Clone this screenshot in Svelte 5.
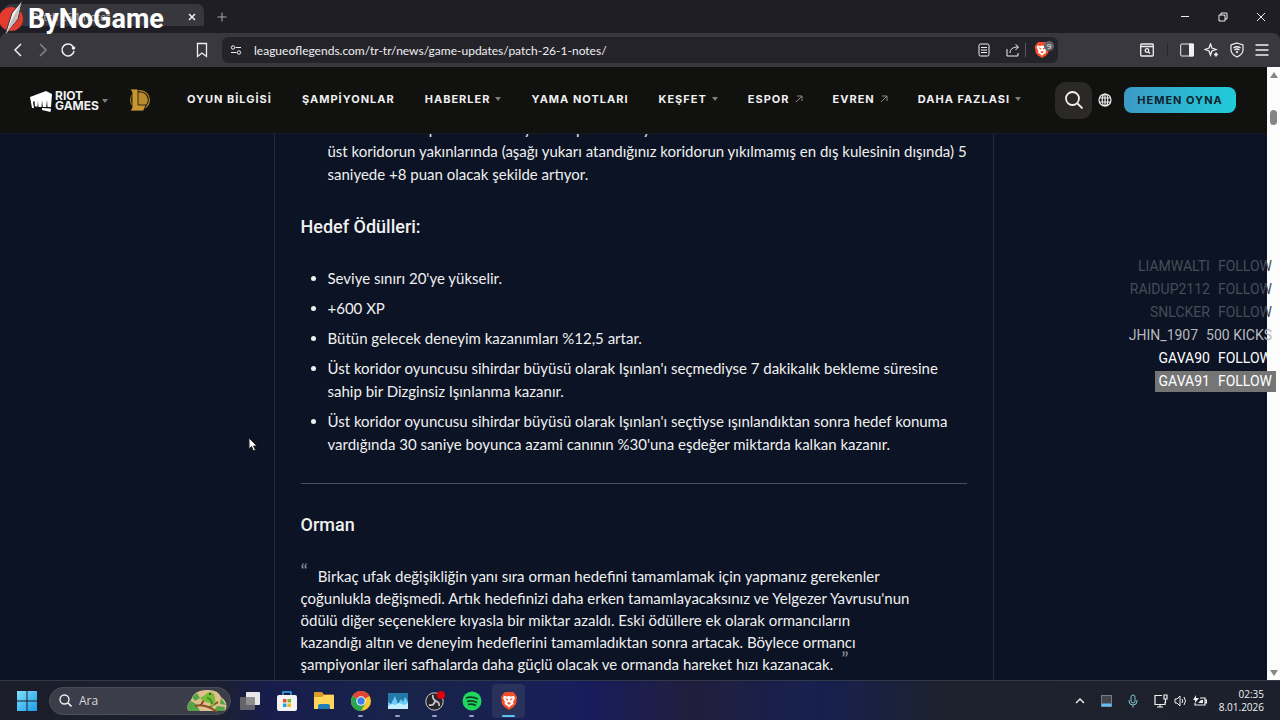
<script lang="ts">
  interface NavItem {
    label: string;
    kind?: 'menu' | 'external';
  }

  const nav: NavItem[] = [
    { label: 'OYUN BİLGİSİ' },
    { label: 'ŞAMPİYONLAR' },
    { label: 'HABERLER', kind: 'menu' },
    { label: 'YAMA NOTLARI' },
    { label: 'KEŞFET', kind: 'menu' },
    { label: 'ESPOR', kind: 'external' },
    { label: 'EVREN', kind: 'external' },
    { label: 'DAHA FAZLASI', kind: 'menu' },
  ];

  // Wrapped lines of each reward entry.
  const rewards = [
    ["Seviye sınırı 20'ye yükselir."],
    ['+600 XP'],
    ['Bütün gelecek deneyim kazanımları %12,5 artar.'],
    [
      "Üst koridor oyuncusu sihirdar büyüsü olarak Işınlan'ı seçmediyse 7 dakikalık bekleme süresine",
      'sahip bir Dizginsiz Işınlanma kazanır.',
    ],
    [
      "Üst koridor oyuncusu sihirdar büyüsü olarak Işınlan'ı seçtiyse ışınlandıktan sonra hedef konuma",
      "vardığında 30 saniye boyunca azami canının %30'una eşdeğer miktarda kalkan kazanır.",
    ],
  ];

  const events = [
    { user: 'LIAMWALTI', action: 'FOLLOW', tone: 'old' },
    { user: 'RAIDUP2112', action: 'FOLLOW', tone: 'old' },
    { user: 'SNLCKER', action: 'FOLLOW', tone: 'old' },
    { user: 'JHIN_1907', action: '500 KICKS', tone: 'recent' },
    { user: 'GAVA90', action: 'FOLLOW', tone: 'new' },
    { user: 'GAVA91', action: 'FOLLOW', tone: 'latest' },
  ];

  const apps = ['Görev görünümü', 'Mağaza', 'Dosya Gezgini', 'Chrome', 'Monitör', 'OBS', 'Spotify', 'Brave'];

  let query = $state('');
  let url = $state('leagueoflegends.com/tr-tr/news/game-updates/patch-26-1-notes/');
</script>

{#snippet brave()}
  <path d="M6 1h8l2 2 2 3-1 7-2.500 3-4.500 3-4.500-3L3 13 2 6l2-3z" fill="#f4502b" />
  <path d="M5 5l3 .5 2-.5 2 .5 3-.5 1 2-2 4 .5 2-2.500 1.500L10 16.500 8 14.500 5.500 13l.5-2-2-4z" fill="#fff" />
  <path d="M6 7l3 1-.500 2zM14 7l-3 1 .5 2zM8 12l2-1 2 1-2 2z" fill="#f4502b" />
{/snippet}

<div class="screen">
  <div class="tabs">
    <div class="tab">
      <span class="tab-title">Patch 26.1 Notes</span>
      <button class="icon" aria-label="Sekmeyi kapat">
        <svg width="10" height="10" viewBox="0 0 10 10"><path d="M2 2l6 6M8 2l-6 6" stroke-width="1.500" /></svg>
      </button>
    </div>
    <button class="icon new-tab" aria-label="Yeni sekme">
      <svg width="10" height="10" viewBox="0 0 10 10"><path d="M5 .5v9M.5 5h9" /></svg>
    </button>
    <div class="window-buttons">
      <button class="icon" aria-label="Küçült">
        <svg width="10" height="10" viewBox="0 0 10 10"><path d="M1 4.500h8" /></svg>
      </button>
      <button class="icon" aria-label="Geri yükle">
        <svg width="10" height="10" viewBox="0 0 10 10"><path d="M1 3h6v6H1zM3 3V1h6v6H7" /></svg>
      </button>
      <button class="icon" aria-label="Kapat">
        <svg width="10" height="10" viewBox="0 0 10 10"><path d="M1 1l8 8M9 1L1 9" /></svg>
      </button>
    </div>
  </div>

  <div class="toolbar">
    <div class="history">
      <button class="icon" aria-label="Geri">
        <svg width="16" height="16" viewBox="0 0 16 16"><path d="M11 2L5 8l6 6" stroke-width="1.500" /></svg>
      </button>
      <button class="icon dim" aria-label="İleri">
        <svg width="16" height="16" viewBox="0 0 16 16"><path d="M5 2l6 6-6 6" stroke-width="1.500" /></svg>
      </button>
      <button class="icon" aria-label="Yenile">
        <svg width="16" height="16" viewBox="0 0 16 16">
          <path d="M14 9a6 6 0 1 1-1-4.500" stroke-width="1.500" />
          <circle cx="13.500" cy="6" r="1.800" fill="currentColor" stroke="none" />
        </svg>
      </button>
    </div>
    <button class="icon" aria-label="Yer imi ekle">
      <svg width="16" height="16" viewBox="0 0 16 16"><path d="M3.500 1.500h9v13L8 11l-4.500 3.500z" stroke-width="1.300" /></svg>
    </button>
    <div class="address">
      <svg width="12" height="12" viewBox="0 0 12 12">
        <circle cx="3" cy="3.500" r="1.700" /><circle cx="9" cy="8.500" r="1.700" />
        <path d="M5.500 3.500H11M1 8.500h5.500" />
      </svg>
      <input type="text" aria-label="Adres" bind:value={url} />
      <button class="icon reader" aria-label="Okuma modu">
        <svg width="12" height="14" viewBox="0 0 12 14"><rect x="1" y="1" width="10" height="12" rx="1.500" /><path d="M3 4.500h6M3 7h6M3 9.500h6" /></svg>
      </button>
      <button class="icon" aria-label="Paylaş">
        <svg width="14" height="14" viewBox="0 0 14 14"><path d="M1 6v7h11v-3M4 10c0-4 3-6 8-6M9.500 1.500L12.500 4 9.500 7" /></svg>
      </button>
      <span class="divider"></span>
      <button class="icon shield" aria-label="Brave Shields">
        <svg class="solid" width="18" height="18" viewBox="0 0 20 20">{@render brave()}</svg>
        <span class="count">9</span>
      </button>
    </div>
    <div class="tools">
      <button class="icon" aria-label="Sekmelerde ara">
        <svg width="14" height="14" viewBox="0 0 14 14"><rect x=".7" y="1" width="12.600" height="12" rx="1" stroke-width="1.300" /><path d="M1 3.500h12M8.500 9l1.500 1.500" stroke-width="1.300" /><circle cx="7" cy="7.500" r="1.800" stroke-width="1.300" /></svg>
      </button>
      <span class="divider"></span>
      <button class="icon" aria-label="Kenar çubuğu">
        <svg width="14" height="14" viewBox="0 0 14 14"><rect x=".7" y="1" width="12.600" height="12" rx="1" /><path d="M9.500 1h4v12h-4z" fill="currentColor" /></svg>
      </button>
      <button class="icon" aria-label="Leo AI">
        <svg width="15" height="15" viewBox="0 0 15 15"><path d="M6.500 1l1.400 4L12 6.500 7.900 8 6.500 12 5 8 1 6.500 5 5z" stroke-width="1.300" /><path d="M12 9.500v4M10 11.500h4" stroke-width="1.600" /></svg>
      </button>
      <button class="icon" aria-label="VPN">
        <svg width="14" height="16" viewBox="0 0 14 16"><path d="M7 1l6 2v5c0 3-3 5.500-6 7-3-1.500-6-4-6-7V3z" stroke-width="1.200" /><path d="M3.500 6q3.500-2.500 7 0M4.500 8q2.500-2 5 0" stroke-width="1.300" /><circle cx="7" cy="10" r=".8" fill="currentColor" /></svg>
      </button>
      <button class="icon" aria-label="Menü">
        <svg width="14" height="12" viewBox="0 0 14 12"><path d="M.5 1h13M.5 6h13M.5 11h13" stroke-width="1.300" /></svg>
      </button>
    </div>
  </div>

  <div class="viewport">
    <div class="page">
      <header>
        <a class="riot" href="#riot" aria-label="Riot Games">
          <svg class="solid" width="22" height="21" viewBox="0 0 22 21">
            <g fill="#fff">
              <path d="M0 6L16 0l6 3-1 13h-3.500L17 9l-.8 7h-3.400L12 9.500l-.5 6.500h-3L8 10l-.5 5.500H5L4.500 10 3 11l1 6H2z" />
              <path d="M12 17l9 .5-.500 3.500-8.500-2z" />
            </g>
          </svg>
          <span>RIOT<br />GAMES</span>
          <i class="caret"></i>
        </a>
        <a class="lol" href="#lol" aria-label="League of Legends">
          <svg class="solid" width="21" height="22" viewBox="0 0 21 22">
            <circle cx="11" cy="11" r="9.400" fill="none" stroke="#b98b2c" stroke-width="1.200" />
            <circle cx="11" cy="11" r="7.800" fill="#b98b2c" />
            <path d="M1 0h8v16h8l-2.500 6H1l2-3V3z" fill="#c7962f" stroke="#111110" stroke-width=".8" />
          </svg>
        </a>
        <nav>
          {#each nav as item (item.label)}
            <a href="#nav">
              {item.label}
              {#if item.kind === 'menu'}
                <i class="caret"></i>
              {:else if item.kind === 'external'}
                <svg width="8" height="8" viewBox="0 0 8 8"><path d="M1 7l6-6M2 1h5v5" /></svg>
              {/if}
            </a>
          {/each}
        </nav>
        <button class="search" aria-label="Ara">
          <svg width="18" height="18" viewBox="0 0 18 18"><circle cx="7.500" cy="7.500" r="6.500" stroke-width="1.800" /><path d="M12.500 12.500l5 5" stroke-width="1.800" /></svg>
        </button>
        <button class="globe" aria-label="Dil">
          <svg width="14" height="14" viewBox="0 0 14 14"><g stroke-width="1.200"><circle cx="7" cy="7" r="6" /><ellipse cx="7" cy="7" rx="2.800" ry="6" /><path d="M7 1v12M1.500 5h11M1.500 9h11" /></g></svg>
        </button>
        <a class="play" href="#play">HEMEN OYNA</a>
      </header>

      <main>
        <article>
          <p class="continued">
            Üst koridordan pasif bir halde yeni bir puan alan yeri<br />
            üst koridorun yakınlarında (aşağı yukarı atandığınız koridorun yıkılmamış en dış kulesinin dışında) 5<br />
            saniyede +8 puan olacak şekilde artıyor.
          </p>
          <h4>Hedef Ödülleri:</h4>
          <ul>
            {#each rewards as lines}
              <li>{#each lines as line, i}{#if i > 0}<br />{/if}{line}{/each}</li>
            {/each}
          </ul>
          <hr />
          <h4>Orman</h4>
          <blockquote>
            <span class="quote open">“</span>Birkaç ufak değişikliğin yanı sıra orman hedefini tamamlamak için yapmanız gerekenler<br />
            çoğunlukla değişmedi. Artık hedefinizi daha erken tamamlayacaksınız ve Yelgezer Yavrusu'nun<br />
            ödülü diğer seçeneklere kıyasla bir miktar azaldı. Eski ödüllere ek olarak ormancıların<br />
            kazandığı altın ve deneyim hedeflerini tamamladıktan sonra artacak. Böylece ormancı<br />
            şampiyonlar ileri safhalarda daha güçlü olacak ve ormanda hareket hızı kazanacak.<span class="quote close">”</span>
          </blockquote>
        </article>
      </main>
    </div>
    <div class="scrollbar">
      <i class="arrow up"></i>
      <i class="thumb"></i>
      <i class="arrow down"></i>
    </div>
  </div>

  <footer>
    <button class="app start" aria-label="Başlat">
      <svg class="solid" width="20" height="20" viewBox="0 0 20 20">
        <defs><linearGradient id="win" x2="1" y2="1"><stop stop-color="#7fe0fb" /><stop offset="1" stop-color="#1a9be8" /></linearGradient></defs>
        <path d="M0 0h9.500v9.500H0zM10.500 0H20v9.500h-9.500zM0 10.500h9.500V20H0zM10.500 10.500H20V20h-9.500z" fill="url(#win)" />
      </svg>
    </button>
    <label class="find">
      <svg width="13" height="13" viewBox="0 0 13 13"><circle cx="5.500" cy="5.500" r="4.500" stroke-width="1.400" /><path d="M9 9l3.500 3.500" stroke-width="1.600" /></svg>
      <input type="text" placeholder="Ara" aria-label="Ara" bind:value={query} />
      <svg class="solid" width="42" height="24" viewBox="0 0 42 24">
        <path d="M2 22Q0 15 5 11 8 1 20 1q12-1 15 7 7 5 5 12-1 2-4 2z" fill="#dfc08e" />
        <path d="M2 22q-2-7 3-10l5 3 4 7zM6 8l5-4 3 5-5 3zM28 22l3-5 8 1-1 4zM35 9l5 7-6-1z" fill="#55a447" />
        <path d="M9 17q10-3 22 6M15 16l3-5M24 18l8-5" fill="none" stroke="#8d4b26" stroke-width="2" />
        <path d="M19 6q4-5 8-2 3 3 2 10l-3 5-2-5q-7-1-10-5z" fill="#79bd35" />
        <path d="M21 9q4 0 5 6" fill="none" stroke="#347e2f" stroke-width="1.500" />
        <circle cx="24" cy="5" r="1" fill="#263a22" />
      </svg>
    </label>
    <div class="apps">
      {#each apps as app, i (app)}
        <button class="app" class:active={app === 'Brave'} class:running={i > 2} aria-label={app}>
          <svg class="solid" width="20" height="20" viewBox="0 0 20 20">
            {#if app === 'Görev görünümü'}
              <rect x="6" y="1" width="14" height="13" rx="1" fill="#e8e8ea" />
              <rect x="0" y="6" width="15" height="13" rx="1" fill="#777" opacity=".8" />
            {:else if app === 'Mağaza'}
              <path d="M6 5V1h8v4" fill="none" stroke="#39aee8" stroke-width="1.500" />
              <rect x="0" y="4" width="20" height="16" rx="2" fill="#f4f4f4" />
              <path d="M6 8h3.500v3.500H6z" fill="#e9502e" /><path d="M10.500 8H14v3.500h-3.500z" fill="#7bb72d" />
              <path d="M6 12.500h3.500V16H6z" fill="#24a1e5" /><path d="M10.500 12.500H14V16h-3.500z" fill="#f5b81c" />
            {:else if app === 'Dosya Gezgini'}
              <path d="M0 2q0-1 1-1h7l2 2.500h9q1 0 1 1V17q0 1-1 1H1q-1 0-1-1z" fill="#d99a27" />
              <path d="M0 6h8l2-2h10v13q0 1-1 1H1q-1 0-1-1z" fill="#ffd659" />
              <path d="M4 18v-3q0-2 2-2h8q2 0 2 2v3z" fill="#217db6" />
            {:else if app === 'Chrome'}
              <circle cx="10" cy="10" r="10" fill="#f8c92c" />
              <path d="M10 10L1.400 5a10 10 0 0 1 17.200 0z" fill="#e34435" />
              <path d="M10 10L1.400 5A10 10 0 0 0 10 20l4.300-7.500z" fill="#2da44e" />
              <circle cx="10" cy="10" r="4.700" fill="#fff" /><circle cx="10" cy="10" r="3.700" fill="#3c80ed" />
            {:else if app === 'Monitör'}
              <rect x="0" y="2" width="20" height="16" fill="#2579a8" />
              <path d="M0 11l3 2 4-8 3 8 3-5 2 3 2-5 3 5v7H0z" fill="#69cdf6" />
              <path d="M0 15l4-2 3 1 4-2 5 2 4-2v6H0z" fill="#c5efff" />
            {:else if app === 'OBS'}
              <circle cx="9.500" cy="10.500" r="8.700" fill="#26252c" stroke="#cfcfcf" />
              <path d="M8 4q-1 4 3 6M4 14q5 1 6-4M14 15q1-4-4-5" fill="none" stroke="#c5c5c8" stroke-width="1.800" />
              <circle cx="16" cy="4" r="4" fill="#e6000b" />
            {:else if app === 'Spotify'}
              <circle cx="10" cy="10" r="9.500" fill="#20d760" />
              <path d="M4 7q6-2 12 1M5 10.500q5-1.500 10 1M6 13.500q4-1 8 1" fill="none" stroke="#0e3d24" stroke-width="1.700" />
            {:else}
              {@render brave()}
            {/if}
          </svg>
        </button>
      {/each}
    </div>
    <div class="tray">
      <svg width="10" height="10" viewBox="0 0 10 10"><path d="M1 7l4-4 4 4" stroke-width="1.400" /></svg>
      <svg width="11" height="12" viewBox="0 0 11 12"><rect x=".5" y=".5" width="10" height="11" fill="#44464e" stroke="#777b85" /><path d="M1 9h9v2H1z" fill="#60bdf7" stroke="#60bdf7" /></svg>
      <svg class="mic" width="10" height="14" viewBox="0 0 10 14"><rect x="3" y="1" width="4" height="8" rx="2" /><path d="M1 6v1q0 4 4 4t4-4V6M5 11v2.500" /></svg>
      <div class="status">
        <svg width="14" height="14" viewBox="0 0 14 14"><path d="M8 1.500H1v9h10V8M3 13h6M6 10.500V13M10 1h3v4h-3zM11.500 5v4" stroke-width="1.200" /></svg>
        <svg width="13" height="12" viewBox="0 0 13 12"><path d="M1 4h2l3-3v10L3 8H1zM8 4q1.500 2 0 4M10 2q3 4 0 8" /></svg>
        <svg width="14" height="12" viewBox="0 0 14 12"><path d="M7 3h5v7H2V8M12 5h1.500v3H12" stroke-width="1.200" /><path d="M3 0L0 5h2v3l4-5H3zM5 8l3-3h2v3z" fill="#eee" stroke="none" /></svg>
      </div>
    </div>
    <time>02:35<br />8.01.2026</time>
  </footer>

  <!-- Stream overlay -->
  <div class="sponsor">
    <svg class="solid" width="26" height="36" viewBox="0 0 26 36">
      <circle cx="11" cy="18" r="12" fill="#e33b2e" />
      <path d="M22 0L12 12 5 34 18 18z" fill="#f7f5f3" stroke="#3a3335" />
      <path d="M21 2L12 18 6 33 17 18z" fill="#c4bfbd" />
    </svg>
    <span>ByNoGame</span>
  </div>
  <ul class="events">
    {#each events as event (event.user)}
      <li class={event.tone}><span>{event.user}</span><span>{event.action}</span></li>
    {/each}
  </ul>
  <svg class="cursor" width="10" height="15" viewBox="0 0 10 15"><path d="M1 1v11l2.500-2.500L5.500 14l2-1-2-4H9z" /></svg>
</div>

<style>
  :global(body) {
    margin: 0;
    background: #0b1324;
  }

  .screen {
    position: relative;
    display: flex;
    flex-direction: column;
    height: 100vh;
    overflow: hidden;
    font-family: 'Open Sans', 'Noto Sans', sans-serif;
    font-size: 11px;
    color: #f0f0f0;
  }

  svg {
    flex: none;
    display: block;
    fill: none;
    stroke: currentColor;
  }

  svg.solid {
    stroke: none;
  }

  button {
    padding: 0;
    border: 0;
    background: none;
    color: inherit;
    font: inherit;
  }

  a {
    color: inherit;
    text-decoration: none;
  }

  input {
    min-width: 0;
    flex: 1;
    padding: 0;
    border: 0;
    outline: 0;
    background: none;
    color: inherit;
    font: inherit;
  }

  .icon {
    display: flex;
    align-items: center;
    justify-content: center;
    flex: none;
    width: 25px;
    height: 25px;
  }

  .tabs {
    display: flex;
    align-items: center;
    flex: none;
    height: 33px;
    background: #1f1e25;
  }

  .tab {
    display: flex;
    align-items: center;
    width: 200px;
    height: 26px;
    margin-left: 4px;
    border-radius: 7px;
    background: #38373e;
  }

  .tab-title {
    flex: 1;
    padding-left: 28px;
    color: #bbb;
    font-size: 10px;
  }

  .new-tab {
    margin-left: 5px;
    color: #aaa;
  }

  .window-buttons {
    display: flex;
    gap: 13px;
    margin-left: auto;
    padding-right: 7px;
  }

  .toolbar {
    display: flex;
    align-items: center;
    flex: none;
    height: 34px;
    border-radius: 7px 7px 0 0;
    background: #39383f;
    box-shadow: 0 -7px 0 #1f1e25;
  }

  .history {
    display: flex;
    width: 184px;
    padding-left: 5px;
  }

  .dim {
    color: #85848a;
  }

  .address {
    display: flex;
    align-items: center;
    flex: 1;
    height: 26px;
    margin: 0 76px 0 8px;
    padding: 0 4px 0 8px;
    border-radius: 6px;
    background: #24232a;
  }

  .address input {
    margin-left: 12px;
    font: 12px Lato, sans-serif;
  }

  .reader {
    margin-right: 4px;
  }

  .divider {
    width: 1px;
    height: 14px;
    background: #59585f;
  }

  .shield {
    position: relative;
    margin-left: 3px;
  }

  .count {
    position: absolute;
    top: 3px;
    right: 0;
    width: 10px;
    border-radius: 5px;
    background: #62616a;
    font-size: 8px;
    line-height: 10px;
  }

  .tools {
    display: flex;
    align-items: center;
    padding-right: 6px;
  }

  .tools .divider {
    margin: 0 6px 0 8px;
    background: #27262d;
  }

  .viewport {
    display: flex;
    flex: 1;
    min-height: 0;
  }

  .page {
    display: flex;
    flex-direction: column;
    flex: 1;
    min-width: 0;
  }

  header {
    box-sizing: border-box;
    display: flex;
    align-items: center;
    flex: none;
    height: 67px;
    padding: 0 31px 0 30px;
    border-bottom: 1px solid #171b24;
    background: #111110;
  }

  .riot {
    display: flex;
    align-items: center;
    gap: 3px;
    margin-top: 2px;
    font: 700 12px/10px Inter, sans-serif;
  }

  .lol {
    margin-left: 21px;
  }

  .caret {
    border: 3px solid transparent;
    border-top: 4px solid #7e7e7e;
    border-bottom: 0;
  }

  nav {
    display: flex;
    gap: 30px;
    margin-left: 37px;
    font: 700 11px/18px Inter, sans-serif;
    letter-spacing: 1px;
    white-space: nowrap;
  }

  nav a {
    display: flex;
    align-items: center;
    gap: 5px;
    margin-bottom: 3px;
  }

  nav svg {
    color: #8a8a8a;
  }

  .search {
    display: grid;
    place-items: center;
    width: 37px;
    height: 37px;
    margin-left: auto;
    border-radius: 11px;
    background: #2a2927;
  }

  .globe {
    margin: 0 12px 0 6px;
  }

  .play {
    width: 112px;
    border-radius: 8px;
    background: linear-gradient(90deg, #3c9ac5, #1fccda);
    color: #10222c;
    font: 700 11px/26px Inter, sans-serif;
    letter-spacing: 1px;
    text-align: center;
  }

  main {
    flex: 1;
    min-height: 0;
    overflow: hidden;
    background: #0b1324;
  }

  article {
    box-sizing: border-box;
    max-width: 720px;
    margin: 0 auto;
    padding: 0 26px 26px;
    border: solid #252c3c;
    border-width: 0 1px;
    font-family: Lato, sans-serif;
    font-size: 15px;
    line-height: 23px;
    white-space: nowrap;
  }

  .continued {
    margin: -17px 0 0;
    padding-left: 27px;
  }

  h4 {
    margin: 29px 0 28px;
    font-family: Roboto, sans-serif;
    font-size: 18px;
    font-weight: 500;
    line-height: 24px;
  }

  article ul {
    margin: 0;
    padding-left: 27px;
  }

  article li + li {
    margin-top: 7px;
  }

  hr {
    margin: 27px 0 0;
    border: 0;
    border-top: 1px solid #4a505c;
  }

  blockquote {
    margin: 0;
    line-height: 22px;
  }

  .quote {
    color: #8b909a;
    font-size: 20px;
    line-height: 0;
    vertical-align: 4px;
  }

  .open {
    margin-right: 10px;
  }

  .close {
    margin-left: 8px;
  }

  .scrollbar {
    display: flex;
    flex-direction: column;
    align-items: center;
    flex: none;
    width: 13px;
    background: #fcfcfc;
  }

  .arrow {
    border: 4px solid transparent;
  }

  .up {
    margin-top: 1px;
    border-bottom: 6px solid #868686;
  }

  .down {
    margin: auto 0 0;
    border-top: 6px solid #868686;
  }

  .thumb {
    width: 7px;
    height: 15px;
    margin-top: 32px;
    border-radius: 4px;
    background: #858585;
  }

  footer {
    box-sizing: border-box;
    display: flex;
    align-items: center;
    flex: none;
    height: 40px;
    padding: 0 16px 0 10px;
    border-top: 1px solid #303949;
    background: linear-gradient(90deg, #1b1e29 0, #1c2030 17%, #171d4c 21%, #18244a 33%, #171d5c 46%, #211e3c 54%, #162050 64%, #1e222c 74%, #1c202c);
  }

  .app {
    position: relative;
    display: grid;
    place-items: center;
    width: 33px;
    height: 34px;
    border-radius: 4px;
  }

  .app.active {
    background: #28325a;
  }

  .running::after {
    content: '';
    position: absolute;
    bottom: 1px;
    left: 14px;
    width: 5px;
    height: 2px;
    border-radius: 1px;
    background: #989fc4;
  }

  .active::after {
    left: 10px;
    width: 13px;
    background: #5cc3f6;
  }

  .find {
    display: flex;
    align-items: center;
    box-sizing: border-box;
    width: 182px;
    height: 28px;
    margin-left: 6px;
    padding: 0 2px 0 9px;
    border: 1px solid #4a4c58;
    border-radius: 14px;
    background: #3b3d49;
  }

  .find input {
    margin-left: 7px;
    font-size: 12px;
  }

  .find input::placeholder {
    color: #d6d7db;
    opacity: 1;
  }

  .apps {
    display: flex;
    gap: 4px;
    margin-left: 2px;
  }

  .tray {
    display: flex;
    align-items: center;
    gap: 16px;
    margin-left: auto;
  }

  .mic {
    color: #7fc8d2;
  }

  .status {
    display: flex;
    align-items: center;
    gap: 6px;
  }

  time {
    margin-left: 12px;
    font-size: 10px;
    line-height: 13px;
    text-align: right;
  }

  .sponsor {
    position: absolute;
    top: 0;
    left: 0;
    display: flex;
    align-items: center;
    gap: 2px;
    font: 700 27px/38px Roboto, sans-serif;
    color: #fff;
  }

  .events {
    position: absolute;
    top: 256px;
    right: 4px;
    display: flex;
    flex-direction: column;
    align-items: flex-end;
    gap: 2px;
    margin: 0;
    padding: 0;
    list-style: none;
    font-family: Roboto, sans-serif;
    font-size: 14px;
    line-height: 21px;
  }

  .events li {
    display: flex;
    gap: 8px;
    padding: 0 4px;
    color: #fff;
  }

  .events .old {
    color: #474c56;
  }

  .events .recent {
    color: #b7b9bd;
  }

  .events .latest {
    background: #757575;
  }

  .cursor {
    position: absolute;
    top: 437px;
    left: 248px;
    fill: #fff;
    stroke: #222;
  }
</style>
